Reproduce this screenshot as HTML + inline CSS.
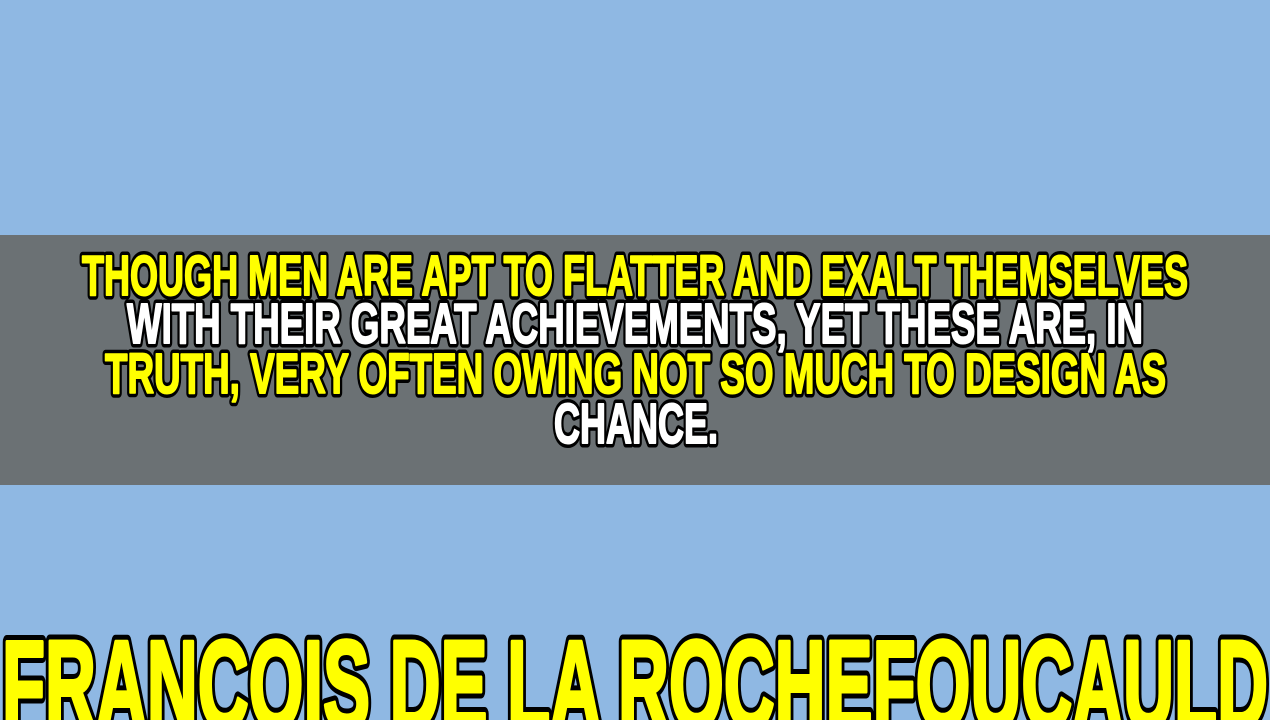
<!DOCTYPE html>
<html><head><meta charset="utf-8"><style>
html,body{margin:0;padding:0;width:1270px;height:720px;overflow:hidden;background:#8fb8e3}
svg{display:block}
text{font-family:"Liberation Sans",sans-serif;font-weight:bold;stroke-linejoin:round}
.o{stroke:#000}
</style></head><body>
<svg width="1270" height="720" viewBox="0 0 1270 720">
<rect x="0" y="0" width="1270" height="720" fill="#8fb8e3"/>
<rect x="0" y="235" width="1270" height="250" fill="#6b7174"/>
<g font-size="57">
<g class="o" stroke-width="9">
<text x="82" y="295" textLength="1106" lengthAdjust="spacingAndGlyphs">THOUGH MEN ARE APT TO FLATTER AND EXALT THEMSELVES</text>
<text x="127" y="343" textLength="1016" lengthAdjust="spacingAndGlyphs">WITH THEIR GREAT ACHIEVEMENTS, YET THESE ARE, IN</text>
<text x="105" y="393" textLength="1061" lengthAdjust="spacingAndGlyphs">TRUTH, VERY OFTEN OWING NOT SO MUCH TO DESIGN AS</text>
<text x="554" y="443" textLength="164" lengthAdjust="spacingAndGlyphs">CHANCE.</text>
</g>
<g stroke-width="2">
<text x="82" y="295" textLength="1106" lengthAdjust="spacingAndGlyphs" fill="#ffff00" stroke="#ffff00">THOUGH MEN ARE APT TO FLATTER AND EXALT THEMSELVES</text>
<text x="127" y="343" textLength="1016" lengthAdjust="spacingAndGlyphs" fill="#ffffff" stroke="#ffffff">WITH THEIR GREAT ACHIEVEMENTS, YET THESE ARE, IN</text>
<text x="105" y="393" textLength="1061" lengthAdjust="spacingAndGlyphs" fill="#ffff00" stroke="#ffff00">TRUTH, VERY OFTEN OWING NOT SO MUCH TO DESIGN AS</text>
<text x="554" y="443" textLength="164" lengthAdjust="spacingAndGlyphs" fill="#ffffff" stroke="#ffffff">CHANCE.</text>
</g>
</g>
<text class="o" x="2" y="728" font-size="125" stroke-width="14" textLength="1266" lengthAdjust="spacingAndGlyphs">FRANCOIS DE LA ROCHEFOUCAULD</text>
<text x="2" y="728" font-size="125" stroke-width="4" stroke="#ffff00" textLength="1266" lengthAdjust="spacingAndGlyphs" fill="#ffff00">FRANCOIS DE LA ROCHEFOUCAULD</text>
</svg>
</body></html>
